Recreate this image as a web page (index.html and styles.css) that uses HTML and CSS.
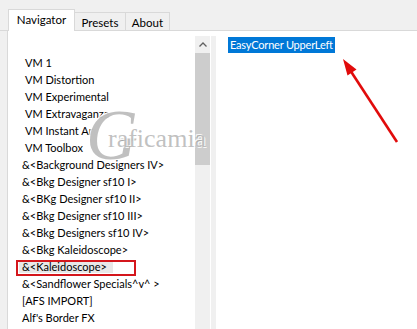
FILE: index.html
```html
<!DOCTYPE html>
<html lang="en">
<head>
  <meta charset="UTF-8">
  <title>Navigator</title>
  <link rel="stylesheet" href="styles.css">
</head>
<body>
  <div class="window">
    <div class="tabs">
      <div class="tab active">Navigator</div>
      <div class="tab">Presets</div>
      <div class="tab">About</div>
    </div>

    <div class="panel">
      <ul class="list">
        <li class="indent">VM 1</li>
        <li class="indent">VM Distortion</li>
        <li class="indent">VM Experimental</li>
        <li class="indent">VM Extravaganza</li>
        <li class="indent">VM Instant Art</li>
        <li class="indent">VM Toolbox</li>
        <li>&amp;&lt;Background Designers IV&gt;</li>
        <li>&amp;&lt;Bkg Designer sf10 I&gt;</li>
        <li>&amp;&lt;BKg Designer sf10 II&gt;</li>
        <li>&amp;&lt;Bkg Designer sf10 III&gt;</li>
        <li>&amp;&lt;Bkg Designers sf10 IV&gt;</li>
        <li>&amp;&lt;Bkg Kaleidoscope&gt;</li>
        <li class="current"><span class="hl">&amp;&lt;Kaleidoscope&gt;</span><span class="mark"></span></li>
        <li>&amp;&lt;Sandflower Specials^v^ &gt;</li>
        <li>[AFS IMPORT]</li>
        <li>Alf's Border FX</li>
      </ul>

      <div class="scrollbar">
        <div class="scroll-btn">
          <svg width="8" height="5" viewBox="0 0 8 5"><polyline points="0.5,4.5 4,1 7.5,4.5" fill="none" stroke="#606060" stroke-width="1.3"/></svg>
        </div>
        <div class="thumb"></div>
      </div>

      <div class="divider"></div>

      <div class="preview">
        <span class="selected">EasyCorner UpperLeft</span>
      </div>
    </div>

    <!-- watermark over the list -->
    <div class="watermark"><span class="wm-g">G</span><span class="wm-text">raficamia</span></div>

    <!-- red annotation arrow -->
    <svg class="arrow" width="417" height="329" viewBox="0 0 417 329">
      <line x1="397" y1="142" x2="350" y2="70" stroke="#e10b0b" stroke-width="2.6"/>
      <polygon points="343,59 356.5,69.5 347.5,75.5" fill="#e10b0b"/>
    </svg>
  </div>
</body>
</html>
```

FILE: styles.css
```css
* {
  margin: 0;
  padding: 0;
  box-sizing: border-box;
}

body {
  background: #f0f0f0;
  font-family: Lato, "Liberation Sans", sans-serif;
  font-size: 11px;
  color: #000;
}

.window {
  position: relative;
  width: 417px;
  height: 329px;
  overflow: hidden;
}

/* Tabs */
.tabs {
  display: flex;
  align-items: flex-end;
  height: 31px;
  padding-left: 8px;
  border-bottom: 1px solid #d9d9d9;
  font-size: 11.5px;
}

.tab {
  height: 18px;
  line-height: 19px;
  border: 1px solid #d9d9d9;
  border-bottom: none;
  margin-left: -1px;
  background: #f0f0f0;
  text-align: center;
}

.tab:nth-child(2) {
  width: 52px;
}

.tab:nth-child(3) {
  width: 45px;
}

.tab.active {
  position: relative;
  z-index: 1;
  width: 67px;
  height: 22px;
  line-height: 20px;
  margin-left: 0;
  margin-bottom: -1px;
  background: #fff;
}

/* Panel */
.panel {
  display: flex;
  height: 298px;
  margin-left: 7px;
  background: #fff;
  border-left: 1px solid #d9d9d9;
}

.list {
  list-style: none;
  width: 187px;
  padding: 23px 0 0 14px;
}

.list li {
  height: 17px;
  line-height: 17px;
  white-space: nowrap;
}

.list li.indent {
  padding-left: 3px;
}

.list li.current {
  position: relative;
}

.hl {
  display: inline-block;
  height: 13px;
  line-height: 13px;
  margin-left: -3px;
  padding: 0 6px 0 3px;
  background: #e8e8e8;
}

.mark {
  position: absolute;
  left: -6px;
  top: 2px;
  width: 120px;
  height: 16px;
  border: 2px solid #d4161c;
}

/* Scrollbar */
.scrollbar {
  width: 15px;
  margin-top: 5px;
  background: #f0f0f0;
}

.scroll-btn {
  display: flex;
  justify-content: center;
  align-items: center;
  height: 17px;
}

.thumb {
  height: 112px;
  background: #cdcdcd;
}

.divider {
  width: 5px;
  margin: 5px 0 0 1px;
  background: #f0f0f0;
}

/* Preview pane */
.preview {
  flex: 1;
  padding: 6px 0 0 12px;
}

.selected {
  display: inline-block;
  height: 16px;
  line-height: 16px;
  padding: 0 2px;
  letter-spacing: -0.2px;
  background: #0078d7;
  color: #fff;
}

/* Overlays */
.watermark {
  position: absolute;
  left: 86px;
  top: 94px;
  white-space: nowrap;
  pointer-events: none;
  font-family: "Liberation Serif", serif;
  color: rgba(140, 140, 140, 0.55);
  text-shadow: 1px 1px 0 rgba(255, 255, 255, 0.9), -1px -1px 0 rgba(255, 255, 255, 0.9);
}

.wm-g {
  font-size: 72px;
  font-style: italic;
  vertical-align: top;
}

.wm-text {
  display: inline-block;
  margin: 30px 0 0 -30px;
  font-size: 26px;
  vertical-align: top;
}

.arrow {
  position: absolute;
  left: 0;
  top: 0;
  pointer-events: none;
}
```
